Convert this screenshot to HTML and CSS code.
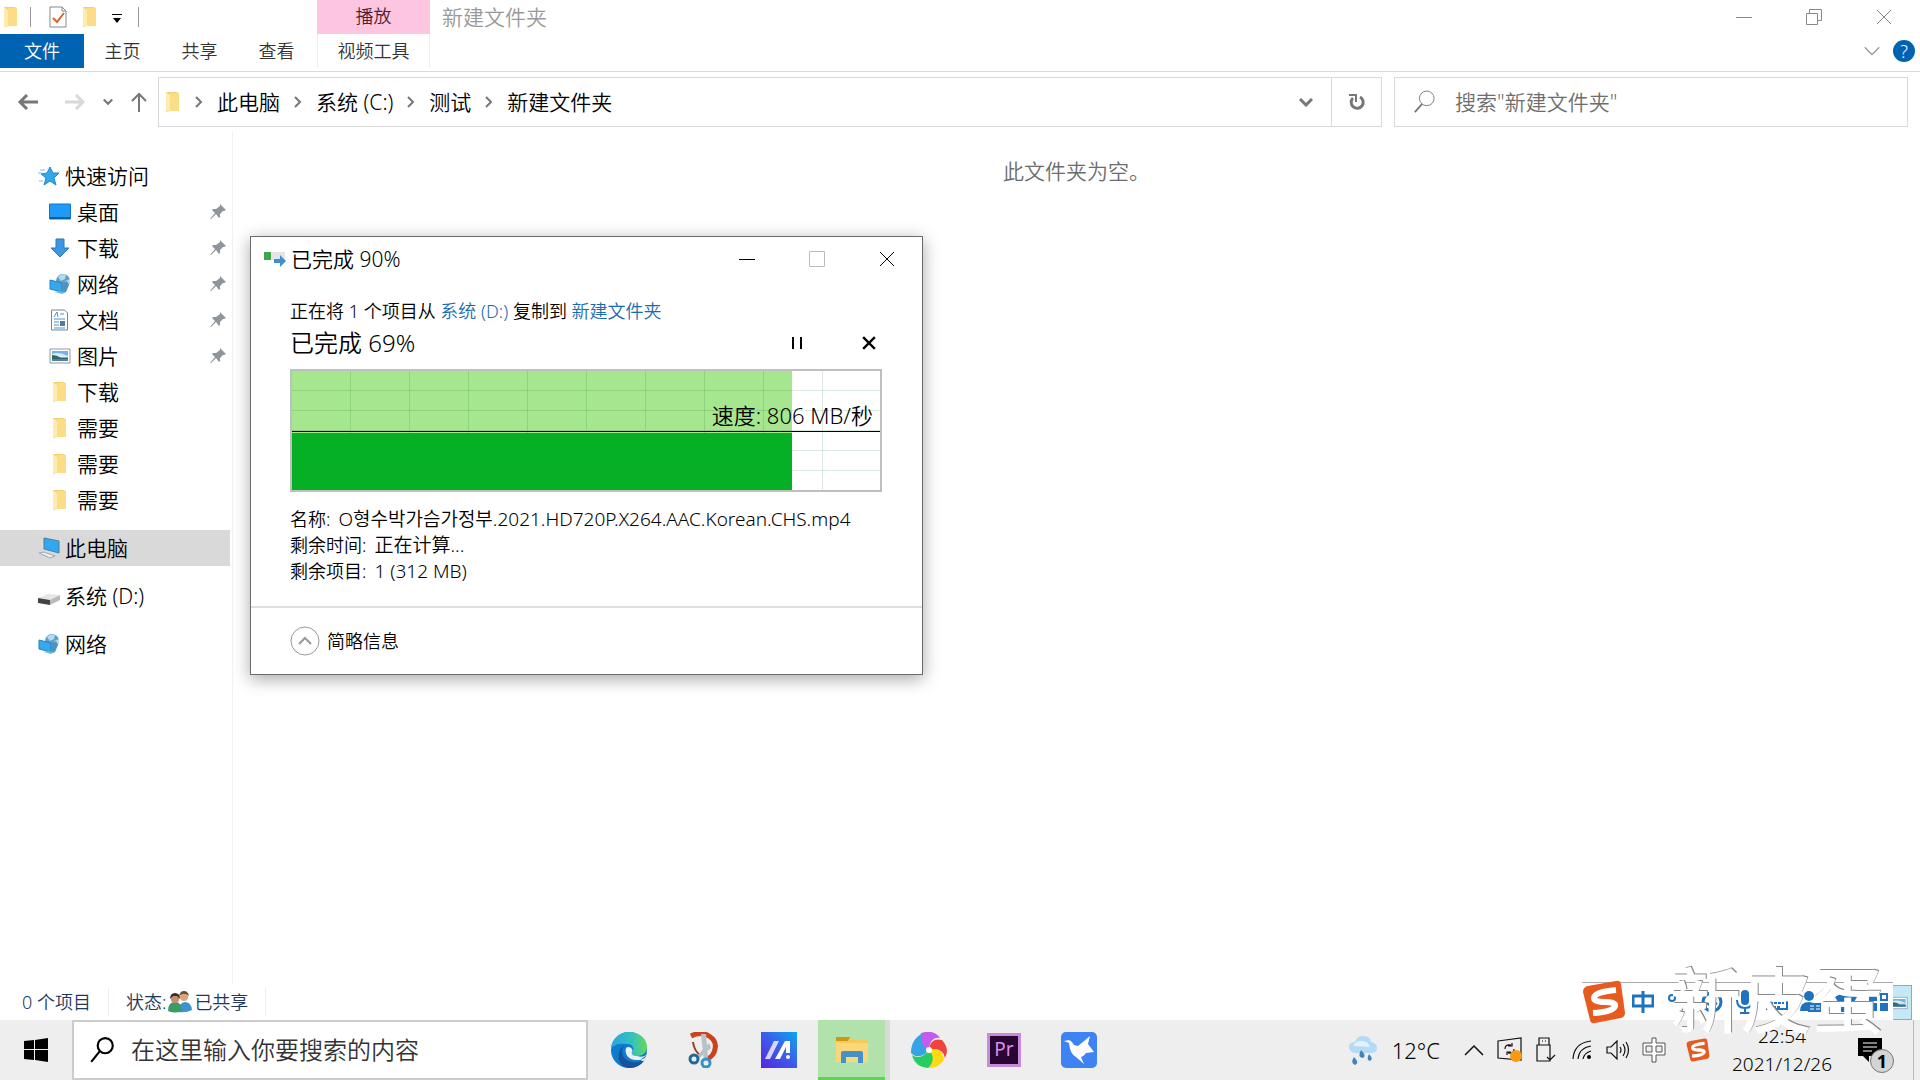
FILE: index.html
```html
<!DOCTYPE html>
<html lang="zh-CN">
<head>
  <meta charset="UTF-8" />
  <title>新建文件夹</title>
  <link rel="stylesheet" href="styles.css">
</head>
<body>

  <!-- Icônes partagées -->
  <svg class="sprite" aria-hidden="true">
    <symbol id="folder" viewBox="0 0 16 22">
      <path d="M1 1h10l3 1v18l-9 0-4 1z" fill="#f3d070"/>
      <path d="M5 2h9v18H5z" fill="#fbdc87"/>
      <path d="M1 1l4 3v17l-4-1z" fill="#fdebb0"/>
    </symbol>
    <symbol id="network" viewBox="0 0 22 22">
      <circle cx="14" cy="8" r="7" fill="#5b9fc9"/>
      <path d="M9 4q4-4 8-2l-1 4-4 2zM16 8l5-2v4l-4 4z" fill="#b5daeb"/>
      <path d="M1 7l12 3v9L1 16z" fill="#35a8ee" stroke="#2783bd"/>
      <path d="M13 11l5-3 2 4-3 7-4 1z" fill="#4e93bd"/>
      <path d="M6 19l7 2 4-2-8-1z" fill="#69b8df"/>
    </symbol>
    <symbol id="picture" viewBox="0 0 22 16">
      <path d="M1 1h20v14H1z" fill="#fff" stroke="#8b99a8"/>
      <path d="M3 3h16v10H3z" fill="#74b2e8"/>
      <path d="M3 6q7-3 16 2v1H3z" fill="#d8edf9"/>
      <path d="M3 7q5 0 9 3h7v3H3z" fill="#31695f"/>
      <path d="M3 11h16v2H3z" fill="#547fa9"/>
    </symbol>
    <symbol id="pin" viewBox="0 0 16 16">
      <path d="M10 0l6 6-2 1-1 0-3 3 0 3-1 1-3-4-5 5-1 0 5-6-3-3 1-1 3 0 4-3z" fill="#8e959b"/>
    </symbol>
    <symbol id="next" viewBox="0 0 8 12">
      <path d="M1 1l5 5-5 5" fill="none" stroke="#777" stroke-width="2"/>
    </symbol>
    <symbol id="down" viewBox="0 0 14 9">
      <path d="M1 1l6 6 6-6" fill="none" stroke="currentColor" stroke-width="3"/>
    </symbol>
    <symbol id="lens" viewBox="0 0 24 26">
      <circle cx="15" cy="9" r="7" fill="none" stroke="currentColor" stroke-width="2"/>
      <path d="M10 14L2 24" stroke="currentColor" stroke-width="2"/>
    </symbol>
    <symbol id="close" viewBox="0 0 16 16">
      <path d="M1 1l14 14M15 1L1 15" stroke="currentColor" fill="none"/>
    </symbol>
    <symbol id="sogou" viewBox="0 0 44 44">
      <path d="M6 6L34 1q4-1 5 3l4 29q0 4-4 5l-26 5q-4 1-5-3L1 12q0-5 5-6z" fill="#e75a20"/>
      <path d="M34 10Q12 12 12 18q0 4 11 4 11 0 10 4-2 6-22 7" fill="none" stroke="#fff" stroke-width="6"/>
    </symbol>
  </svg>

  <div class="explorer">

    <!-- Barre de titre -->
    <header class="titlebar">
      <div class="quick-tools">
        <svg width="16" height="22"><use href="#folder"/></svg>
        <span class="bar"></span>
        <svg class="tool-doc" width="18" height="22" viewBox="0 0 18 22">
          <path d="M1 1h12l4 4v16H1z" fill="#fff" stroke="#888"/>
          <path d="M13 1v4h4" fill="none" stroke="#888"/>
          <path d="M4 12l4 4 7-9" fill="none" stroke="#d9622b" stroke-width="2"/>
        </svg>
        <svg class="tool-folder" width="16" height="22"><use href="#folder"/></svg>
        <svg class="tool-more" width="10" height="10" viewBox="0 0 10 10"><path d="M0 0h10v1H0zM1 4h8L5 9z"/></svg>
        <span class="bar"></span>
      </div>
      <div class="context-tab">播放</div>
      <h1>新建文件夹</h1>
      <div class="window-buttons">
        <button aria-label="最小化"><svg width="16" height="16" viewBox="0 0 16 16"><path d="M0 8.500h16" stroke="currentColor"/></svg></button>
        <button aria-label="还原"><svg width="16" height="16" viewBox="0 0 16 16"><path d="M.5 4.500h11v11H.5zM3.500 4V.5h12v11H12" fill="none" stroke="currentColor"/></svg></button>
        <button aria-label="关闭"><svg width="16" height="16"><use href="#close"/></svg></button>
      </div>
    </header>

    <!-- Onglets du ruban -->
    <nav class="ribbon">
      <button class="tab file">文件</button>
      <button class="tab">主页</button>
      <button class="tab">共享</button>
      <button class="tab">查看</button>
      <button class="tab video">视频工具</button>
      <div class="ribbon-end">
        <button aria-label="展开功能区"><svg width="18" height="11" viewBox="0 0 14 9"><path d="M1 1l6 6 6-6" fill="none" stroke="#999" stroke-width="1"/></svg></button>
        <button class="help" aria-label="帮助">?</button>
      </div>
    </nav>

    <!-- Barre d'adresse -->
    <div class="address-row">
      <div class="arrows">
        <button aria-label="后退"><svg width="22" height="20" viewBox="0 0 22 20"><path d="M21 10H3M10 3l-7 7 7 7" fill="none" stroke="#777" stroke-width="3"/></svg></button>
        <button aria-label="前进"><svg width="22" height="20" viewBox="0 0 22 20"><path d="M1 10h18M12 3l7 7-7 7" fill="none" stroke="#d8d8d8" stroke-width="3"/></svg></button>
        <button aria-label="最近浏览的位置" class="recent"><svg width="10" height="8" viewBox="0 0 14 9"><use href="#down"/></svg></button>
        <button aria-label="上移"><svg width="18" height="20" viewBox="0 0 18 20"><path d="M9 20V2M2 9l7-7 7 7" fill="none" stroke="#777" stroke-width="2"/></svg></button>
      </div>
      <div class="address">
        <svg width="16" height="22"><use href="#folder"/></svg>
        <svg class="sep" width="8" height="12"><use href="#next"/></svg>
        <a href="#">此电脑</a>
        <svg class="sep" width="8" height="12"><use href="#next"/></svg>
        <a href="#">系统 (C:)</a>
        <svg class="sep" width="8" height="12"><use href="#next"/></svg>
        <a href="#">测试</a>
        <svg class="sep" width="8" height="12"><use href="#next"/></svg>
        <a href="#">新建文件夹</a>
        <button class="history" aria-label="历史记录"><svg width="14" height="9"><use href="#down"/></svg></button>
        <button class="refresh" aria-label="刷新">
          <svg width="18" height="18" viewBox="0 0 18 18"><path d="M12 4a6 6 0 1 1-7 1" fill="none" stroke="#777" stroke-width="3"/><path d="M1 2h7v7" fill="none" stroke="#777" stroke-width="2"/></svg>
        </button>
      </div>
      <label class="search">
        <svg width="22" height="24" viewBox="0 0 24 26"><circle cx="15" cy="9" r="8" fill="none" stroke="#777"/><path d="M10 15L2 24" stroke="#777" stroke-width="2"/></svg>
        <input type="text" aria-label="搜索" placeholder='搜索"新建文件夹"'>
      </label>
    </div>

    <div class="panes">
      <!-- Volet de navigation -->
      <aside class="sidebar">
        <a href="#" class="item">
          <svg width="22" height="20" viewBox="0 0 22 20"><path d="M12 1l3 6 6 0-5 5 2 7-6-4-6 4 2-7-5-4 6-1z" fill="#34a6ec" stroke="#2588c8"/><path d="M2 4h5M0 7h4M1 15h4" stroke="#6cc0f1"/></svg>
          快速访问
        </a>
        <a href="#" class="item child">
          <svg width="22" height="18" viewBox="0 0 22 18"><path d="M.5 1h21v15H.5z" fill="#1e9bfa" stroke="#1873bb"/><path d="M1 15h20" stroke="#075e9f" stroke-width="2"/></svg>
          桌面 <svg class="pin" width="16" height="16"><use href="#pin"/></svg>
        </a>
        <a href="#" class="item child">
          <svg width="22" height="20" viewBox="0 0 22 20"><path d="M7 1h8v9h5l-9 9-9-9h5z" fill="#3c96e4" stroke="#2879be"/></svg>
          下载 <svg class="pin" width="16" height="16"><use href="#pin"/></svg>
        </a>
        <a href="#" class="item child">
          <svg width="22" height="22"><use href="#network"/></svg>
          网络 <svg class="pin" width="16" height="16"><use href="#pin"/></svg>
        </a>
        <a href="#" class="item child">
          <svg width="22" height="22" viewBox="0 0 22 22"><path d="M2.500 1h13l3 3v17h-16z" fill="#fff" stroke="#778590"/><path d="M5 8l3-5 1 5M11 5h4M5 10h11M5 13h5M5 16h5M5 19h11" fill="none" stroke="#4f91c1"/><path d="M11 12h5v5h-5z" fill="#4d7ca3"/></svg>
          文档 <svg class="pin" width="16" height="16"><use href="#pin"/></svg>
        </a>
        <a href="#" class="item child">
          <svg width="22" height="16"><use href="#picture"/></svg>
          图片 <svg class="pin" width="16" height="16"><use href="#pin"/></svg>
        </a>
        <a href="#" class="item child"><svg width="22" height="22"><use href="#folder"/></svg>下载</a>
        <a href="#" class="item child"><svg width="22" height="22"><use href="#folder"/></svg>需要</a>
        <a href="#" class="item child"><svg width="22" height="22"><use href="#folder"/></svg>需要</a>
        <a href="#" class="item child"><svg width="22" height="22"><use href="#folder"/></svg>需要</a>
        <a href="#" class="item root active">
          <svg width="22" height="22" viewBox="0 0 22 22"><path d="M6 1l15 3v12L6 12z" fill="#31a7f1" stroke="#47809e"/><path d="M1 16l5-1 11 4-5 2z" fill="#e8edf0" stroke="#9daab1"/></svg>
          此电脑
        </a>
        <a href="#" class="item root">
          <svg width="22" height="20" viewBox="0 0 22 20"><path d="M0 12l10-4 12 1-10 5z" fill="#e5e5e5"/><path d="M0 12l12 2v5L0 17z" fill="#444"/><path d="M12 14l10-5v5l-10 5z" fill="#bababa"/></svg>
          系统 (D:)
        </a>
        <a href="#" class="item root"><svg width="22" height="22"><use href="#network"/></svg>网络</a>
      </aside>

      <main class="content">
        <p>此文件夹为空。</p>
      </main>
    </div>

    <!-- Barre d'état -->
    <footer class="status">
      <span class="cell">0 个项目</span>
      <span class="cell">状态:
        <svg width="24" height="22" viewBox="0 0 24 22">
          <path d="M11 21q0-10 6-10t7 8q-6 3-13 2z" fill="#3d94cd"/><circle cx="16" cy="6" r="4" fill="#dda57c"/><path d="M11 5q1-5 5-5t5 5l-3-2-4 0-3 2z" fill="#6d4e3a"/>
          <path d="M0 20q0-9 7-9t7 9q-7 3-14 0z" fill="#3b9c69"/><circle cx="7" cy="8" r="4" fill="#c98d69"/><path d="M2 8q0-6 5-6t5 6l-3-3-4 0z" fill="#33312f"/>
        </svg>
        已共享</span>
    </footer>
  </div>

  <!-- Fenêtre de copie -->
  <section class="dialog">
    <div class="dialog-title">
      <svg width="22" height="16" viewBox="0 0 22 16"><path d="M0 1h21v8H0z" fill="#e3e5e6"/><path d="M0 1h7v8H0z" fill="#3ea64a"/><path d="M10 8h6V4l6 6-6 6v-4h-6z" fill="#3f90d0"/></svg>
      <h2>已完成 90%</h2>
      <div class="window-buttons">
        <button aria-label="最小化"><svg width="16" height="16" viewBox="0 0 16 16"><path d="M0 8.500h16" stroke="currentColor"/></svg></button>
        <button aria-label="最大化" disabled><svg width="16" height="16" viewBox="0 0 16 16"><path d="M.5.5h15v15H.5z" fill="none" stroke="currentColor"/></svg></button>
        <button aria-label="关闭"><svg width="16" height="16"><use href="#close"/></svg></button>
      </div>
    </div>
    <div class="dialog-body">
      <p>正在将 1 个项目从 <a href="#">系统 (D:)</a> 复制到 <a href="#">新建文件夹</a></p>
      <div class="progress-head">
        <h3>已完成 69%</h3>
        <button aria-label="暂停"><svg width="12" height="12" viewBox="0 0 12 12"><path d="M1 0h2v12H1zM9 0h2v12H9z"/></svg></button>
        <button aria-label="取消"><svg width="14" height="14" viewBox="0 0 12 12"><path d="M1 1l10 10M11 1L1 11" stroke="#000" stroke-width="2"/></svg></button>
      </div>
      <div class="chart">
        <div class="done"></div>
        <div class="grid"></div>
        <div class="rate"></div>
        <div class="speed">速度: 806 MB/秒</div>
      </div>
      <dl>
        <div><dt>名称:</dt><dd>O형수박가슴가정부.2021.HD720P.X264.AAC.Korean.CHS.mp4</dd></div>
        <div><dt>剩余时间:</dt><dd>正在计算...</dd></div>
        <div><dt>剩余项目:</dt><dd>1 (312 MB)</dd></div>
      </dl>
    </div>
    <div class="dialog-foot">
      <button>
        <svg width="30" height="30" viewBox="0 0 30 30"><circle cx="15" cy="15" r="14" fill="none" stroke="#999"/><path d="M9 18l6-6 6 6" fill="none" stroke="#999" stroke-width="2"/></svg>
        简略信息
      </button>
    </div>
  </section>

  <!-- Barre des tâches -->
  <div class="taskbar">
    <button class="start" aria-label="开始"><svg width="24" height="24" viewBox="0 0 24 24"><path d="M0 3l10-1v9H0zM11 2l13-2v11H11zM0 12h10v10L0 21zM11 12h13v12l-13-2z"/></svg></button>
    <label class="task-search">
      <svg width="26" height="28" viewBox="0 0 24 26"><use href="#lens"/></svg>
      <input type="text" aria-label="搜索" placeholder="在这里输入你要搜索的内容">
    </label>
    <div class="apps">
      <button aria-label="Edge">
        <svg width="36" height="36" viewBox="0 0 36 36">
          <defs>
            <linearGradient id="edgeTop"><stop offset="0" stop-color="#28a7dc"/><stop offset=".6" stop-color="#35c2bd"/><stop offset="1" stop-color="#64d957"/></linearGradient>
          </defs>
          <circle cx="18" cy="18" r="18" fill="#0c7bd0"/>
          <path d="M0 17C1 6 9 0 18 0c11 0 18 7 18 15 0 6-5 9-10 9-4 0-6-2-5-4 3-3 1-8-5-8C8 11 2 13 0 17z" fill="url(#edgeTop)"/>
          <path d="M14 13c-6 4-3 16 8 17 6 1 9-1 12-3-3 6-9 9-16 9-9-1-12-9-10-15 1-4 3-7 6-8z" fill="#17539c"/>
          <path d="M15 16c-2 6 3 13 12 12 5 0 9-4 8-2-1 3-4 4-5 2 0-2 5-3 5-5-2 2-5 2-9 1-4 0-6-2-5-4 2-3-3-7-6-4z" fill="#eee"/>
        </svg>
      </button>
      <button aria-label="截图工具">
        <svg width="36" height="36" viewBox="0 0 36 36">
          <path d="M5 4Q15-1 23 4t6 13q-1 7-8 10" fill="none" stroke="#c8441d" stroke-width="5"/>
          <path d="M7 10q1 9 8 14" fill="none" stroke="#a13b1d" stroke-width="2"/>
          <path d="M15 2l5 0 2 25-4 2zM23 11l2 5-13 11-3-1z" fill="#b8c1c7"/>
          <circle cx="8" cy="27" r="4" fill="#e5f2fb" stroke="#246799" stroke-width="3"/><circle cx="20" cy="31" r="4" fill="#e5f2fb" stroke="#3a91c6" stroke-width="3"/>
        </svg>
      </button>
      <button aria-label="MyASUS">
        <svg width="36" height="36" viewBox="0 0 36 36">
          <defs><linearGradient id="asus" x1="0" y1="1" x2="1" y2="0"><stop offset="0" stop-color="#5724df"/><stop offset=".5" stop-color="#3d5bea"/><stop offset="1" stop-color="#0aa7ef"/></linearGradient></defs>
          <path d="M0 0h36v36H0z" fill="url(#asus)"/>
          <path d="M4 27L13 9h5L9 27z" fill="#d6d6ff"/><path d="M14 27l10-18h5v12h-4v-6l-6 12z" fill="#fff"/><circle cx="27" cy="25" r="2" fill="#fff"/>
        </svg>
      </button>
      <button class="running" aria-label="文件资源管理器">
        <svg width="34" height="30" viewBox="0 0 34 30">
          <path d="M1 4q0-2 2-2h12l2 3h14q2 0 2 2v20H1z" fill="#f5cb57"/><path d="M1 2h14l-2 4H1z" fill="#c99a19"/><path d="M1 8h32v19H1z" fill="#fbd77a"/><path d="M6 28V18q0-2 2-2h18q2 0 2 2v10h-5v-6H11v6z" fill="#4391c8"/>
        </svg>
      </button>
      <button aria-label="浏览器">
        <svg width="36" height="36" viewBox="0 0 36 36">
          <path d="M18 18Q7 15 10 1q13-4 19 5Q19 4 18 18z" fill="#c45bea"/>
          <path d="M18 18Q19 5 31 8q8 9 3 18-2-11-16-8z" fill="#f1433d"/>
          <path d="M18 18q13-4 15 10-6 9-18 8 10-7 3-18z" fill="#ffd912"/>
          <path d="M18 18q8 9-1 18Q4 35 1 23q8 6 17-5z" fill="#28cd61"/>
          <path d="M18 18Q8 29 0 21 0 7 12 1 7 12 18 18z" fill="#36a3e4"/>
          <circle cx="18" cy="18" r="3" fill="#fff"/>
        </svg>
      </button>
      <button aria-label="Premiere Pro"><span class="pr">Pr</span></button>
      <button aria-label="迅雷">
        <svg width="36" height="36" viewBox="0 0 36 36"><rect width="36" height="36" rx="5" fill="#3e83f4"/><path d="M3 9l5-1q3 1 5 5l4 1L29 4l-2 8 6 8-8 1q-2 3-5 4l3 7-8-7q-6-3-7-14z" fill="#fff"/></svg>
      </button>
    </div>

    <div class="tray">
      <button class="weather">
        <svg width="30" height="30" viewBox="0 0 30 30"><path d="M7 18q-6-1-6-6t6-5q2-7 9-6 6 0 7 6 6 1 6 6t-6 5z" fill="#b5daf5"/><path d="M5 11q3-5 7-5 8-1 10 6" fill="#e2f2fc"/><path d="M13 15q6 6 2 8-6-1-2-8zM6 22q6 6 1 8-5-2-1-8zM21 19q5 5 1 7-4-1-1-7z" fill="#4283b9"/></svg>
        12°C
      </button>
      <div class="tray-icons">
        <button aria-label="显示隐藏的图标"><svg width="20" height="12" viewBox="0 0 20 12"><path d="M1 11l9-9 9 9" fill="none" stroke="#111" stroke-width="1.500"/></svg></button>
        <button aria-label="更新"><svg width="26" height="26" viewBox="0 0 26 26"><path d="M1 4l23-3v22L1 21zM8 12q0-5 6-4M15 6v3h-4M17 12q0 5-6 4M10 18v-3h4" fill="none" stroke="#111" stroke-width="1.200"/><circle cx="19" cy="19" r="6" fill="#f99a13"/></svg></button>
        <button aria-label="USB"><svg width="20" height="26" viewBox="0 0 20 26"><path d="M3 8V1h10v7M1 8h13v16H1zM6 4h1M9 4h1M11 20l3 3 5-5" fill="none" stroke="#111" stroke-width="1.200"/></svg></button>
        <button aria-label="网络"><svg width="20" height="20" viewBox="0 0 20 20"><path d="M1 19Q2 3 19 1M6 19Q7 8 19 6M11 19q1-6 8-8" fill="none" stroke="#111" stroke-width="1.200"/><circle cx="17" cy="17" r="2"/></svg></button>
        <button aria-label="音量"><svg width="24" height="20" viewBox="0 0 24 20"><path d="M1 7h4l6-6v18l-6-6H1zM14 7q2 3 0 6M17 4q4 6 0 12M20 2q5 8 0 16" fill="none" stroke="#111" stroke-width="1.200"/></svg></button>
        <button aria-label="中文输入"><svg width="24" height="26" viewBox="0 0 24 26"><path d="M10 1h4v5h9v12h-9v7h-4v-7H1V6h9zM4 9h6v6H4zM14 9h6v6h-6z" fill="#fff" fill-rule="evenodd" stroke="#555"/></svg></button>
        <button class="sogou" aria-label="搜狗输入法"><svg width="24" height="24"><use href="#sogou"/></svg></button>
      </div>
      <button class="clock"><span>22:54</span><span>2021/12/26</span></button>
      <button class="notice" aria-label="通知"><svg width="24" height="24" viewBox="0 0 24 24"><path d="M0 0h24v18H11v6l-6-6H0z"/><path d="M5 5h14M5 9h14M5 13h9" stroke="#fff"/></svg><span class="badge">1</span></button>
      <button class="show-desktop" aria-label="显示桌面"></button>
    </div>
  </div>

  <!-- Barre de saisie flottante -->
  <div class="view-mode"><svg width="18" height="16" viewBox="0 0 22 16"><use href="#picture"/></svg></div>
  <div class="ime-bar">
    <svg class="ime-logo" width="44" height="44"><use href="#sogou"/></svg>
    <svg width="22" height="22" viewBox="0 0 22 22"><path d="M1 5h20v10H1zM11 0v22" fill="none" stroke="#1e72be" stroke-width="3"/></svg>
    <svg width="22" height="22" viewBox="0 0 22 22"><circle cx="5" cy="7" r="3" fill="none" stroke="#1e72be" stroke-width="2"/><path d="M14 14h5l-4 6z" fill="#1e72be"/></svg>
    <svg width="22" height="22" viewBox="0 0 22 22"><circle cx="11" cy="11" r="9" fill="none" stroke="#1e72be" stroke-width="3"/><path d="M6 12q5 6 10 0" fill="none" stroke="#1e72be" stroke-width="2"/></svg>
    <svg width="18" height="24" viewBox="0 0 18 24"><rect x="5" width="8" height="15" rx="4" fill="#1e72be"/><path d="M1 10q0 8 8 8t8-8M9 18v5M4 23h10" fill="none" stroke="#1e72be" stroke-width="2"/></svg>
    <svg width="22" height="18" viewBox="0 0 22 18"><path d="M1 2h20v14H1z" fill="none" stroke="#1e72be" stroke-width="2"/><path d="M4 6h14M4 10h14M7 14h8" stroke="#1e72be" stroke-width="2" stroke-dasharray="3 1"/></svg>
    <svg width="22" height="22" viewBox="0 0 22 22"><circle cx="9" cy="5" r="5" fill="#1e72be"/><path d="M0 20q0-9 9-9 4 0 6 3v6z" fill="#1e72be"/><path d="M8 12h13v9H8z" fill="#1e72be"/><path d="M10 15h4M10 18h4M16 15h4M16 18h4" stroke="#fff"/></svg>
    <svg width="22" height="22" viewBox="0 0 22 22"><path d="M7 2h8l7 4-3 5-3-1v11H6V10l-3 1-3-5z" fill="#1e72be"/></svg>
    <svg width="20" height="22" viewBox="0 0 20 22"><path d="M0 2h8v8H0zM0 12h8v8H0zM11 12h8v8h-8z" fill="#1e72be"/><path d="M12 3h6v6h-6z" fill="none" stroke="#1e72be" stroke-width="2"/></svg>
  </div>
  <div class="watermark">新皮蛋</div>

</body>
</html>
```
FILE: styles.css
```css
* {
  margin: 0;
  padding: 0;
  box-sizing: border-box;
}

body {
  font-family: "Noto Sans", "Noto Sans CJK SC", "Noto Sans CJK KR", sans-serif;
  font-size: 21px;
  font-weight: 350;
  line-height: 28px;
  color: #000;
  background: #fff;
  height: 100vh;
  display: flex;
  flex-direction: column;
  overflow: hidden;
}

button {
  font: inherit;
  color: inherit;
  background: none;
  border: none;
  cursor: pointer;
}

input {
  flex: 1;
  min-width: 0;
  font: inherit;
  background: none;
  border: none;
  outline: none;
}

a {
  color: inherit;
  text-decoration: none;
}

svg {
  display: block;
  flex: none;
}

h1, h2, h3 {
  font-weight: inherit;
}

.sprite {
  position: absolute;
  width: 0;
  height: 0;
}

/* EXPLORATEUR */
.explorer {
  flex: 1;
  min-height: 0;
  display: flex;
  flex-direction: column;
}

.titlebar {
  display: flex;
  height: 34px;
}
.quick-tools {
  width: 317px;
  display: flex;
  align-items: center;
  padding-left: 3px;
}
.bar {
  width: 1px;
  height: 20px;
  margin-left: 11px;
  background: #999;
}
.tool-doc {
  margin-left: 18px;
}
.tool-folder {
  margin-left: 15px;
}
.tool-more {
  margin: 4px 5px 0 14px;
}
.context-tab {
  width: 113px;
  font-size: 18px;
  line-height: 32px;
  text-align: center;
  color: #4a1f35;
  background: #fdc5df;
}
.titlebar h1 {
  flex: 1;
  padding-left: 12px;
  font-size: 21px;
  line-height: 34px;
  color: #999;
}
.window-buttons {
  display: flex;
}
.window-buttons button {
  width: 70px;
  display: flex;
  align-items: center;
  justify-content: center;
}
.titlebar .window-buttons {
  color: #888;
  padding-right: 1px;
}

/* RUBAN */
.ribbon {
  display: flex;
  height: 38px;
  padding-bottom: 3px;
  font-size: 18px;
  border-bottom: 1px solid #dadada;
}
.tab {
  width: 77px;
  color: #333;
}
.tab.file {
  width: 84px;
  color: #fff;
  background: #0063b1;
}
.tab.video {
  width: 113px;
  margin-left: 2px;
  border: solid #eee;
  border-width: 0 1px;
}
.ribbon-end {
  flex: 1;
  display: flex;
  justify-content: flex-end;
  align-items: center;
  gap: 12px;
  padding-right: 5px;
}
.help {
  width: 22px;
  height: 22px;
  border-radius: 50%;
  color: #fff;
  background: #0063b1;
  font-size: 18px;
  line-height: 22px;
}

/* ADRESSE */
.address-row {
  display: flex;
  padding: 5px 12px 5px 17px;
}
.arrows {
  width: 141px;
  display: flex;
  align-items: center;
  color: #777;
}
.arrows button + button {
  margin-left: 25px;
}
.arrows .recent + button,
.arrows .recent.recent {
  margin-left: 17px;
}
.address {
  flex: 1;
  height: 50px;
  display: flex;
  align-items: center;
  padding-left: 6px;
  border: 1px solid #d9d9d9;
}
.sep {
  margin: 0 14px;
}
.history {
  width: 50px;
  height: 48px;
  margin-left: auto;
  display: flex;
  align-items: center;
  justify-content: center;
  color: #777;
}
.refresh {
  width: 50px;
  height: 48px;
  display: flex;
  align-items: center;
  justify-content: center;
  border-left: 1px solid #d9d9d9;
}
.search {
  width: 28%;
  max-width: 514px;
  margin-left: 12px;
  padding-left: 18px;
  display: flex;
  align-items: center;
  gap: 20px;
  border: 1px solid #d9d9d9;
}
.search input::placeholder {
  color: #6d6d6d;
}

/* VOLETS */
.panes {
  flex: 1;
  min-height: 0;
  display: flex;
}
.sidebar {
  width: 233px;
  padding: 26px 2px 0 0;
  border-right: 1px solid #f2f2f2;
}
.item {
  height: 36px;
  display: flex;
  align-items: center;
  gap: 5px;
  padding-left: 38px;
}
.item.child {
  gap: 6px;
  padding-left: 49px;
}
.item.root {
  margin-top: 12px;
}
.item.active {
  background: #d9d9d9;
}
.pin {
  margin-left: auto;
  margin-right: 4px;
}
.content {
  flex: 1;
  padding-top: 25px;
  text-align: center;
  color: #6d6d6d;
}

.status {
  display: flex;
  align-items: center;
  height: 36px;
  padding-left: 5px;
  font-size: 18px;
  color: #1e395b;
}
.cell {
  display: flex;
  align-items: center;
  gap: 2px;
  padding: 0 17px;
  border-right: 1px solid #eee;
}

/* FENÊTRE DE COPIE */
.dialog {
  position: absolute;
  left: 250px;
  top: 236px;
  width: 673px;
  background: #fff;
  border: 1px solid #6b6b6b;
  box-shadow: 0 4px 16px rgba(0, 0, 0, 0.35);
  font-size: 18px;
}
.dialog-title {
  display: flex;
  align-items: center;
  height: 43px;
  padding-left: 13px;
}
.dialog-title h2 {
  flex: 1;
  padding-left: 5px;
  font-size: 21px;
}
.dialog-title button:disabled {
  color: #bbb;
}
.dialog-body {
  padding: 17px 40px 22px 39px;
}
.dialog-body a {
  color: #1a6bb0;
}
.progress-head {
  display: flex;
  align-items: center;
  height: 36px;
  margin-bottom: 8px;
}
.progress-head h3 {
  flex: 1;
  font-size: 24px;
}
.progress-head button {
  width: 36px;
  display: flex;
  justify-content: center;
}
.progress-head button + button {
  margin: 0 -1px 0 40px;
  width: 28px;
}
.chart {
  position: relative;
  height: 123px;
  border: 2px solid #bfbfbf;
}
.done, .rate {
  position: absolute;
  left: 0;
  bottom: 0;
  width: 85%;
}
.done {
  top: 0;
  background: #a6e68f;
}
.rate {
  height: 57px;
  background: #06b025;
}
.grid {
  position: absolute;
  inset: 0;
  background:
    repeating-linear-gradient(90deg, transparent 0 58px, rgba(0, 90, 30, 0.14) 58px 59px),
    repeating-linear-gradient(transparent 0 19px, rgba(0, 90, 30, 0.14) 19px 20px);
}
.speed {
  position: absolute;
  left: 0;
  right: 0;
  top: 29px;
  padding-right: 7px;
  text-align: right;
  font-size: 22px;
  line-height: 31px;
  border-bottom: 1px solid #000;
}
dl {
  padding-top: 14px;
}
dl div {
  display: flex;
  gap: 8px;
  line-height: 26px;
}
dd {
  font-size: 19px;
}
.dialog-foot {
  padding: 18px 39px;
  border-top: 2px solid #dfdfdf;
}
.dialog-foot button {
  display: flex;
  align-items: center;
  gap: 7px;
}

/* BARRE DES TÂCHES */
.taskbar {
  height: 60px;
  display: flex;
  background: #eee;
}
.start {
  width: 72px;
  display: flex;
  align-items: center;
  justify-content: center;
}
.task-search {
  width: 516px;
  display: flex;
  align-items: center;
  gap: 16px;
  padding-left: 15px;
  font-size: 24px;
  background: #fff;
  border: 2px solid #ccc;
}
.task-search input::placeholder {
  color: #333;
}
.apps {
  display: flex;
  gap: 3px;
  padding-left: 5px;
}
.apps button {
  width: 72px;
  display: flex;
  align-items: center;
  justify-content: center;
}
.apps .running {
  background: #b1e2ab;
  border-right: 5px solid #d8dcd8;
  box-shadow: inset 0 -3px #5ad94a;
}
.pr {
  width: 34px;
  height: 34px;
  font-size: 19px;
  font-weight: 400;
  line-height: 26px;
  color: #d68fee;
  background: #2a0634;
  border: 3px solid #c58ad9;
}
.tray {
  flex: 1;
  display: flex;
  align-items: center;
  justify-content: flex-end;
}
.weather {
  display: flex;
  align-items: center;
  gap: 14px;
  margin-right: 16px;
  font-size: 22px;
}
.tray-icons {
  display: flex;
  align-items: center;
  margin-right: 12px;
}
.tray-icons button {
  width: 36px;
  display: flex;
  justify-content: center;
}
.tray-icons .sogou {
  margin-left: 8px;
}
.clock {
  width: 108px;
  display: flex;
  flex-direction: column;
  align-items: center;
  font-size: 19px;
}
.notice {
  position: relative;
  margin: 0 31px 0 22px;
}
.badge {
  position: absolute;
  left: 12px;
  top: 11px;
  width: 24px;
  height: 24px;
  border: 1px solid #777;
  border-radius: 50%;
  background: #d4d4d4;
  font-size: 18px;
  font-weight: 700;
  line-height: 22px;
}
.show-desktop {
  width: 7px;
  height: 100%;
  border-left: 1px solid #bbb;
}

/* BARRE DE SAISIE ET FILIGRANE */
.ime-bar {
  position: absolute;
  right: 27px;
  bottom: 60px;
  width: 311px;
  height: 38px;
  display: flex;
  align-items: center;
  justify-content: space-between;
  padding-right: 4px;
  background: #fff;
  border-top: 1px solid #aaa;
}
.ime-logo {
  margin-right: -6px;
}
.view-mode {
  position: absolute;
  right: 8px;
  bottom: 60px;
  width: 32px;
  height: 35px;
  display: flex;
  align-items: center;
  justify-content: flex-end;
  padding-right: 3px;
  background: #c5e8f5;
  border: 1px solid #72b5cc;
}
.watermark {
  position: absolute;
  right: 37px;
  bottom: 40px;
  font-size: 71px;
  font-weight: 500;
  line-height: 80px;
  color: #fff;
  text-shadow: 1px -1px #888;
  pointer-events: none;
}
```
